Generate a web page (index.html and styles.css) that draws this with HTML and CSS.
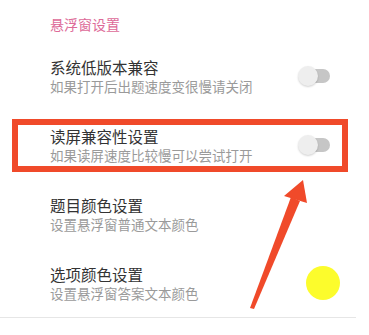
FILE: index.html
```html
<!DOCTYPE html>
<html lang="zh-CN">
<head>
<meta charset="utf-8">
<title>悬浮窗设置</title>
<link rel="stylesheet" href="styles.css">
</head>
<body>
<div class="page">
  <div class="section-title">悬浮窗设置</div>
  <div class="row">
    <div class="text">
      <div class="title">系统低版本兼容</div>
      <div class="sub">如果打开后出题速度变很慢请关闭</div>
    </div>
    <div class="switch"><span class="track"></span><span class="thumb"></span></div>
  </div>
  <div class="row">
    <div class="text">
      <div class="title">读屏兼容性设置</div>
      <div class="sub">如果读屏速度比较慢可以尝试打开</div>
    </div>
    <div class="switch"><span class="track"></span><span class="thumb"></span></div>
  </div>
  <div class="row">
    <div class="text">
      <div class="title">题目颜色设置</div>
      <div class="sub">设置悬浮窗普通文本颜色</div>
    </div>
  </div>
  <div class="row">
    <div class="text">
      <div class="title">选项颜色设置</div>
      <div class="sub">设置悬浮窗答案文本颜色</div>
    </div>
    <div class="swatch"></div>
  </div>
  <div class="divider"></div>

  <div class="highlight"></div>
  <svg class="arrow" width="369" height="335" viewBox="0 0 369 335">
    <polygon points="291,197 300,201 254,309 250,308" fill="#f04a2a"/>
    <polygon points="303,180 284,196 307,203" fill="#f04a2a"/>
  </svg>
</div>
</body>
</html>
```

FILE: styles.css
```css
html, body {
  margin: 0;
  padding: 0;
  background: #ffffff;
}

.page {
  position: relative;
  width: 369px;
  height: 335px;
  overflow: hidden;
  font-family: "Noto Sans CJK SC", "Noto Sans", sans-serif;
}

.section-title {
  height: 41px;
  box-sizing: border-box;
  padding: 14px 0 0 50px;
  font-size: 14px;
  line-height: 20px;
  color: #dd6a98;
}

.row {
  height: 69px;
  box-sizing: border-box;
  padding: 1px 29px 0 50px;
  display: flex;
  align-items: center;
  justify-content: space-between;
}

.text {
  display: flex;
  flex-direction: column;
}

.title {
  font-size: 15.5px;
  line-height: 19px;
  color: #333333;
}

.sub {
  font-size: 13.5px;
  line-height: 18px;
  color: #9a9a9a;
}

.switch {
  position: relative;
  width: 32px;
  height: 20px;
  margin-right: 10px;
}

.track {
  position: absolute;
  left: 3px;
  right: 0;
  top: 3px;
  height: 14px;
  border-radius: 7px;
  background: #c6c6c6;
}

.thumb {
  position: absolute;
  left: 0;
  top: 0;
  width: 20px;
  height: 20px;
  border-radius: 50%;
  background: #eeeeee;
  box-shadow: 0 1px 2px rgba(0, 0, 0, 0.18);
}

.swatch {
  width: 34px;
  height: 34px;
  border-radius: 50%;
  background: #fcfc2c;
  margin-top: -1px;
}

.divider {
  height: 1px;
  margin-right: 13px;
  background: #e6e6e6;
}

.highlight {
  position: absolute;
  left: 12px;
  top: 119px;
  width: 336px;
  height: 53px;
  box-sizing: border-box;
  border: 6px solid #f04a2a;
}

.arrow {
  position: absolute;
  left: 0;
  top: 0;
}
```
